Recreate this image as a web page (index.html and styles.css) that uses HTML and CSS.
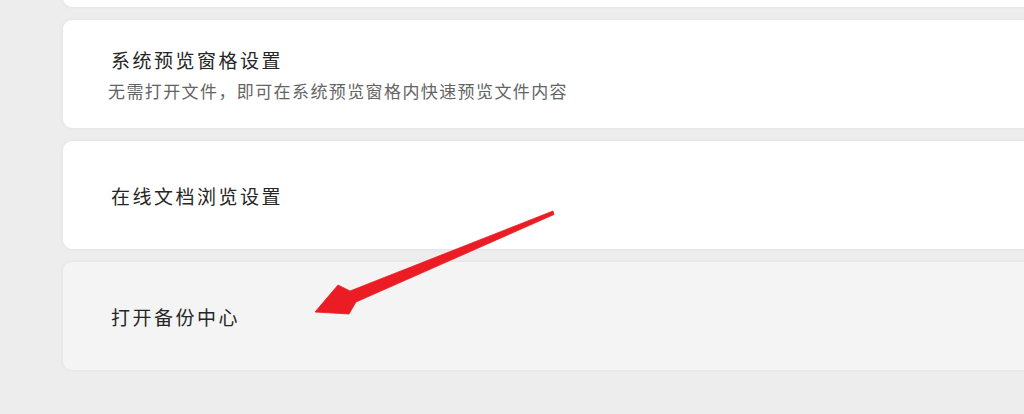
FILE: index.html
```html
<!DOCTYPE html>
<html lang="zh-CN">
<head>
<meta charset="utf-8">
<title>设置</title>
<link rel="stylesheet" href="styles.css">
</head>
<body>
<div class="list">
  <div class="card card--cut"></div>
  <div class="card">
    <div class="card__title">系统预览窗格设置</div>
    <div class="card__desc">无需打开文件，即可在系统预览窗格内快速预览文件内容</div>
  </div>
  <div class="card">
    <div class="card__title">在线文档浏览设置</div>
  </div>
  <div class="card card--hover">
    <div class="card__title">打开备份中心</div>
  </div>
</div>
<svg class="annot" width="1024" height="414" viewBox="0 0 1024 414" aria-hidden="true">
  <path d="M553,211 L350,291 L338,285 L315,312 L349,314 L356,302 L554,214.5 Z" fill="#ec1c24" stroke="#ec1c24" stroke-width="0.8" stroke-linejoin="round"/>
</svg>
</body>
</html>
```

FILE: styles.css
```css
html, body {
  margin: 0;
  padding: 0;
}
body {
  width: 1024px;
  height: 414px;
  overflow: hidden;
  background: #ededed;
  font-family: "Noto Sans CJK SC", "Noto Sans", sans-serif;
  position: relative;
}
.list {
  display: flex;
  flex-direction: column;
  gap: 13px;
  margin-top: -101px;
  padding-left: 63px;
  margin-right: -40px;
}
.card {
  height: 108px;
  box-sizing: border-box;
  background: #ffffff;
  border-radius: 9px;
  box-shadow: 0 0 4px rgba(0, 0, 0, 0.06);
  display: flex;
  flex-direction: column;
  justify-content: center;
  padding: 2px 0 0 45px;
}
.card--hover {
  background: #f4f4f4;
}
.card__title {
  font-size: 19px;
  line-height: 28px;
  letter-spacing: 2.5px;
  color: #262626;
  padding-left: 3px;
}
.card__desc {
  font-size: 17px;
  line-height: 26px;
  letter-spacing: 1.4px;
  color: #646464;
  margin-top: 4px;
}
.annot {
  position: absolute;
  left: 0;
  top: 0;
  pointer-events: none;
}
```
